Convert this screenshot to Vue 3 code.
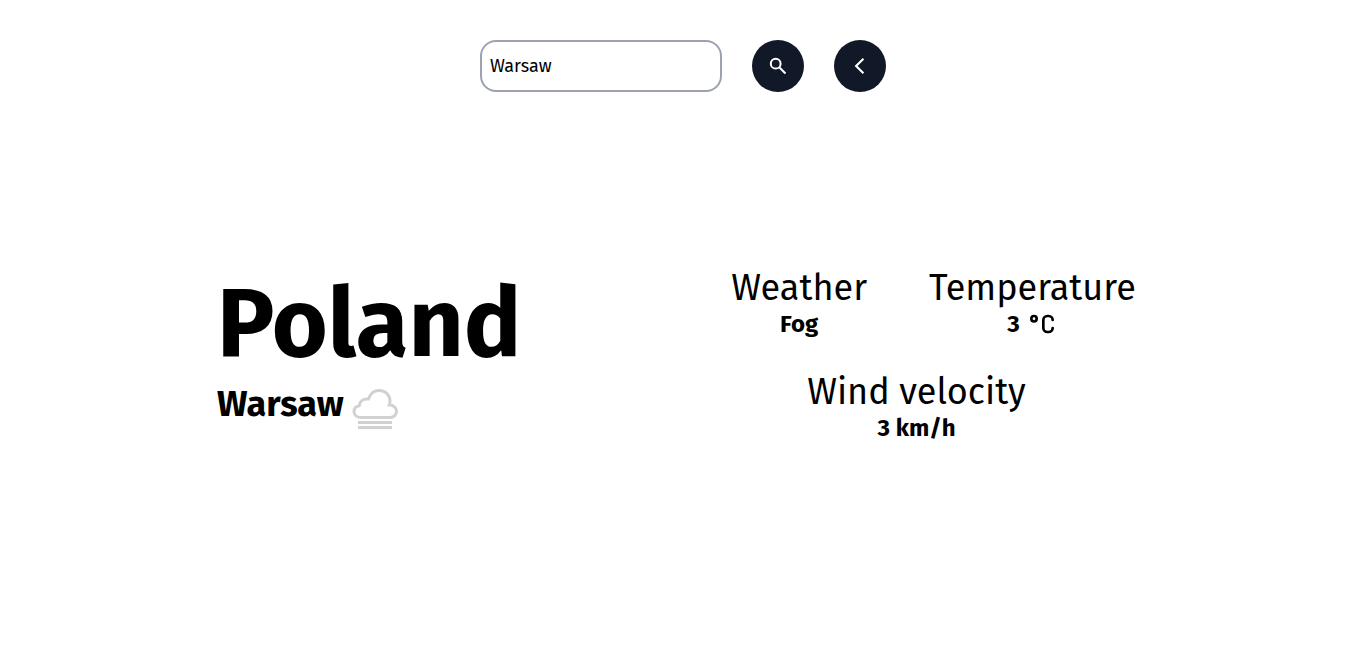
<script setup>
import { ref } from 'vue'

const query = ref('Warsaw')
const city = ref('Warsaw')
</script>

<template>
  <div class="page">
    <form class="search" @submit.prevent="city = query">
      <input v-model="query" class="field" type="text" aria-label="City" />
      <button class="round" type="submit" aria-label="Search">
        <svg width="20" height="20" viewBox="0 0 20 20" fill="none" stroke="currentColor" stroke-width="2" aria-hidden="true">
          <circle cx="7.700" cy="7.700" r="4.900" />
          <path d="M11.200 11.200 17.500 17.500" />
        </svg>
      </button>
      <button class="round" type="button" aria-label="Back">
        <svg width="20" height="20" viewBox="0 0 20 20" fill="currentColor" aria-hidden="true">
          <path d="M14.2 3.4 12.7 1.9 4.6 10l8.1 8.1 1.5-1.5L7.6 10z" />
        </svg>
      </button>
    </form>

    <main class="content">
      <section class="place">
        <h1>Poland</h1>
        <div class="city">
          <h2>{{ city }}</h2>
          <svg class="fog" width="46" height="42" viewBox="0 0 46 42" fill="none" stroke="#d1d1d1" stroke-width="3" aria-hidden="true">
            <path d="M8.5 29.5C4.6 29.5 2 26.8 2 23.6c0-3.4 2.3-5.4 5.2-5.9C7.8 13.3 11.500 10.500 16.500 11C18.200 5.400 22.300 2.500 27.300 2.500c6.300 0 11 4.700 10.700 11.300-.1 1.200-.3 2.100-.7 3.100 4.300 0 7.200 2.900 7.200 6.300 0 3.500-2.700 6.300-6.300 6.300z" />
            <path d="M6 34.500h34M6 39.500h34" />
          </svg>
        </div>
      </section>

      <section class="facts">
        <div class="row">
          <div class="fact">
            <h3>Weather</h3>
            <p>Fog</p>
          </div>
          <div class="fact">
            <h3>Temperature</h3>
            <p class="degrees">
              3
              <svg width="32" height="32" viewBox="0 0 24 24" fill="none" stroke="currentColor" stroke-width="2" stroke-linecap="round" stroke-linejoin="round" role="img" aria-label="degrees Celsius">
                <circle cx="6" cy="8" r="2" />
                <path d="M20 9a3 3 0 0 0-3-3h-1a3 3 0 0 0-3 3v6a3 3 0 0 0 3 3h1a3 3 0 0 0 3-3" />
              </svg>
            </p>
          </div>
        </div>
        <div class="fact">
          <h3>Wind velocity</h3>
          <p>3 km/h</p>
        </div>
      </section>
    </main>
  </div>
</template>

<style>
body {
  margin: 0;
  background: #fff;
}
</style>

<style scoped>
.page {
  box-sizing: border-box;
  min-height: 100vh;
  padding: 40px 16px 0;
  color: #000;
  font-family: "Fira Sans", "Noto Sans", sans-serif;
}

.search {
  display: flex;
  justify-content: center;
  gap: 30px;
}

.field {
  box-sizing: border-box;
  width: 242px;
  height: 52px;
  padding: 0 8px;
  border: 2px solid #9ca3af;
  border-radius: 16px;
  background: #fff;
  color: #000;
  font: 400 18px "Fira Sans", "Noto Sans", sans-serif;
}

.round {
  display: flex;
  align-items: center;
  justify-content: center;
  width: 52px;
  height: 52px;
  padding: 0;
  border: 0;
  border-radius: 50%;
  background: #111827;
  color: #fff;
  cursor: pointer;
}

.content {
  display: grid;
  grid-template-columns: 1fr 1fr;
  margin-top: 176px;
  padding: 0 200px;
}

h1,
h2,
h3,
p {
  margin: 0;
}

.place {
  padding-left: 1px;
}

h1 {
  font-size: 96px;
  font-weight: 700;
  line-height: 96px;
  margin-top: 8px;
}

.city {
  display: flex;
  align-items: flex-start;
  gap: 8px;
  margin-top: 12px;
}

.fog {
  margin-top: 4px;
}

h2 {
  font-size: 36px;
  font-weight: 700;
  line-height: 40px;
}

.facts {
  display: flex;
  flex-direction: column;
  align-items: center;
  gap: 32px;
}

.row {
  display: flex;
  gap: 62px;
  padding-left: 34px;
}

.fact {
  text-align: center;
}

h3 {
  font-size: 36px;
  font-weight: 400;
  line-height: 40px;
}

p {
  font-size: 24px;
  font-weight: 700;
  line-height: 32px;
}

.degrees {
  display: flex;
  justify-content: center;
  gap: 6px;
}
</style>
